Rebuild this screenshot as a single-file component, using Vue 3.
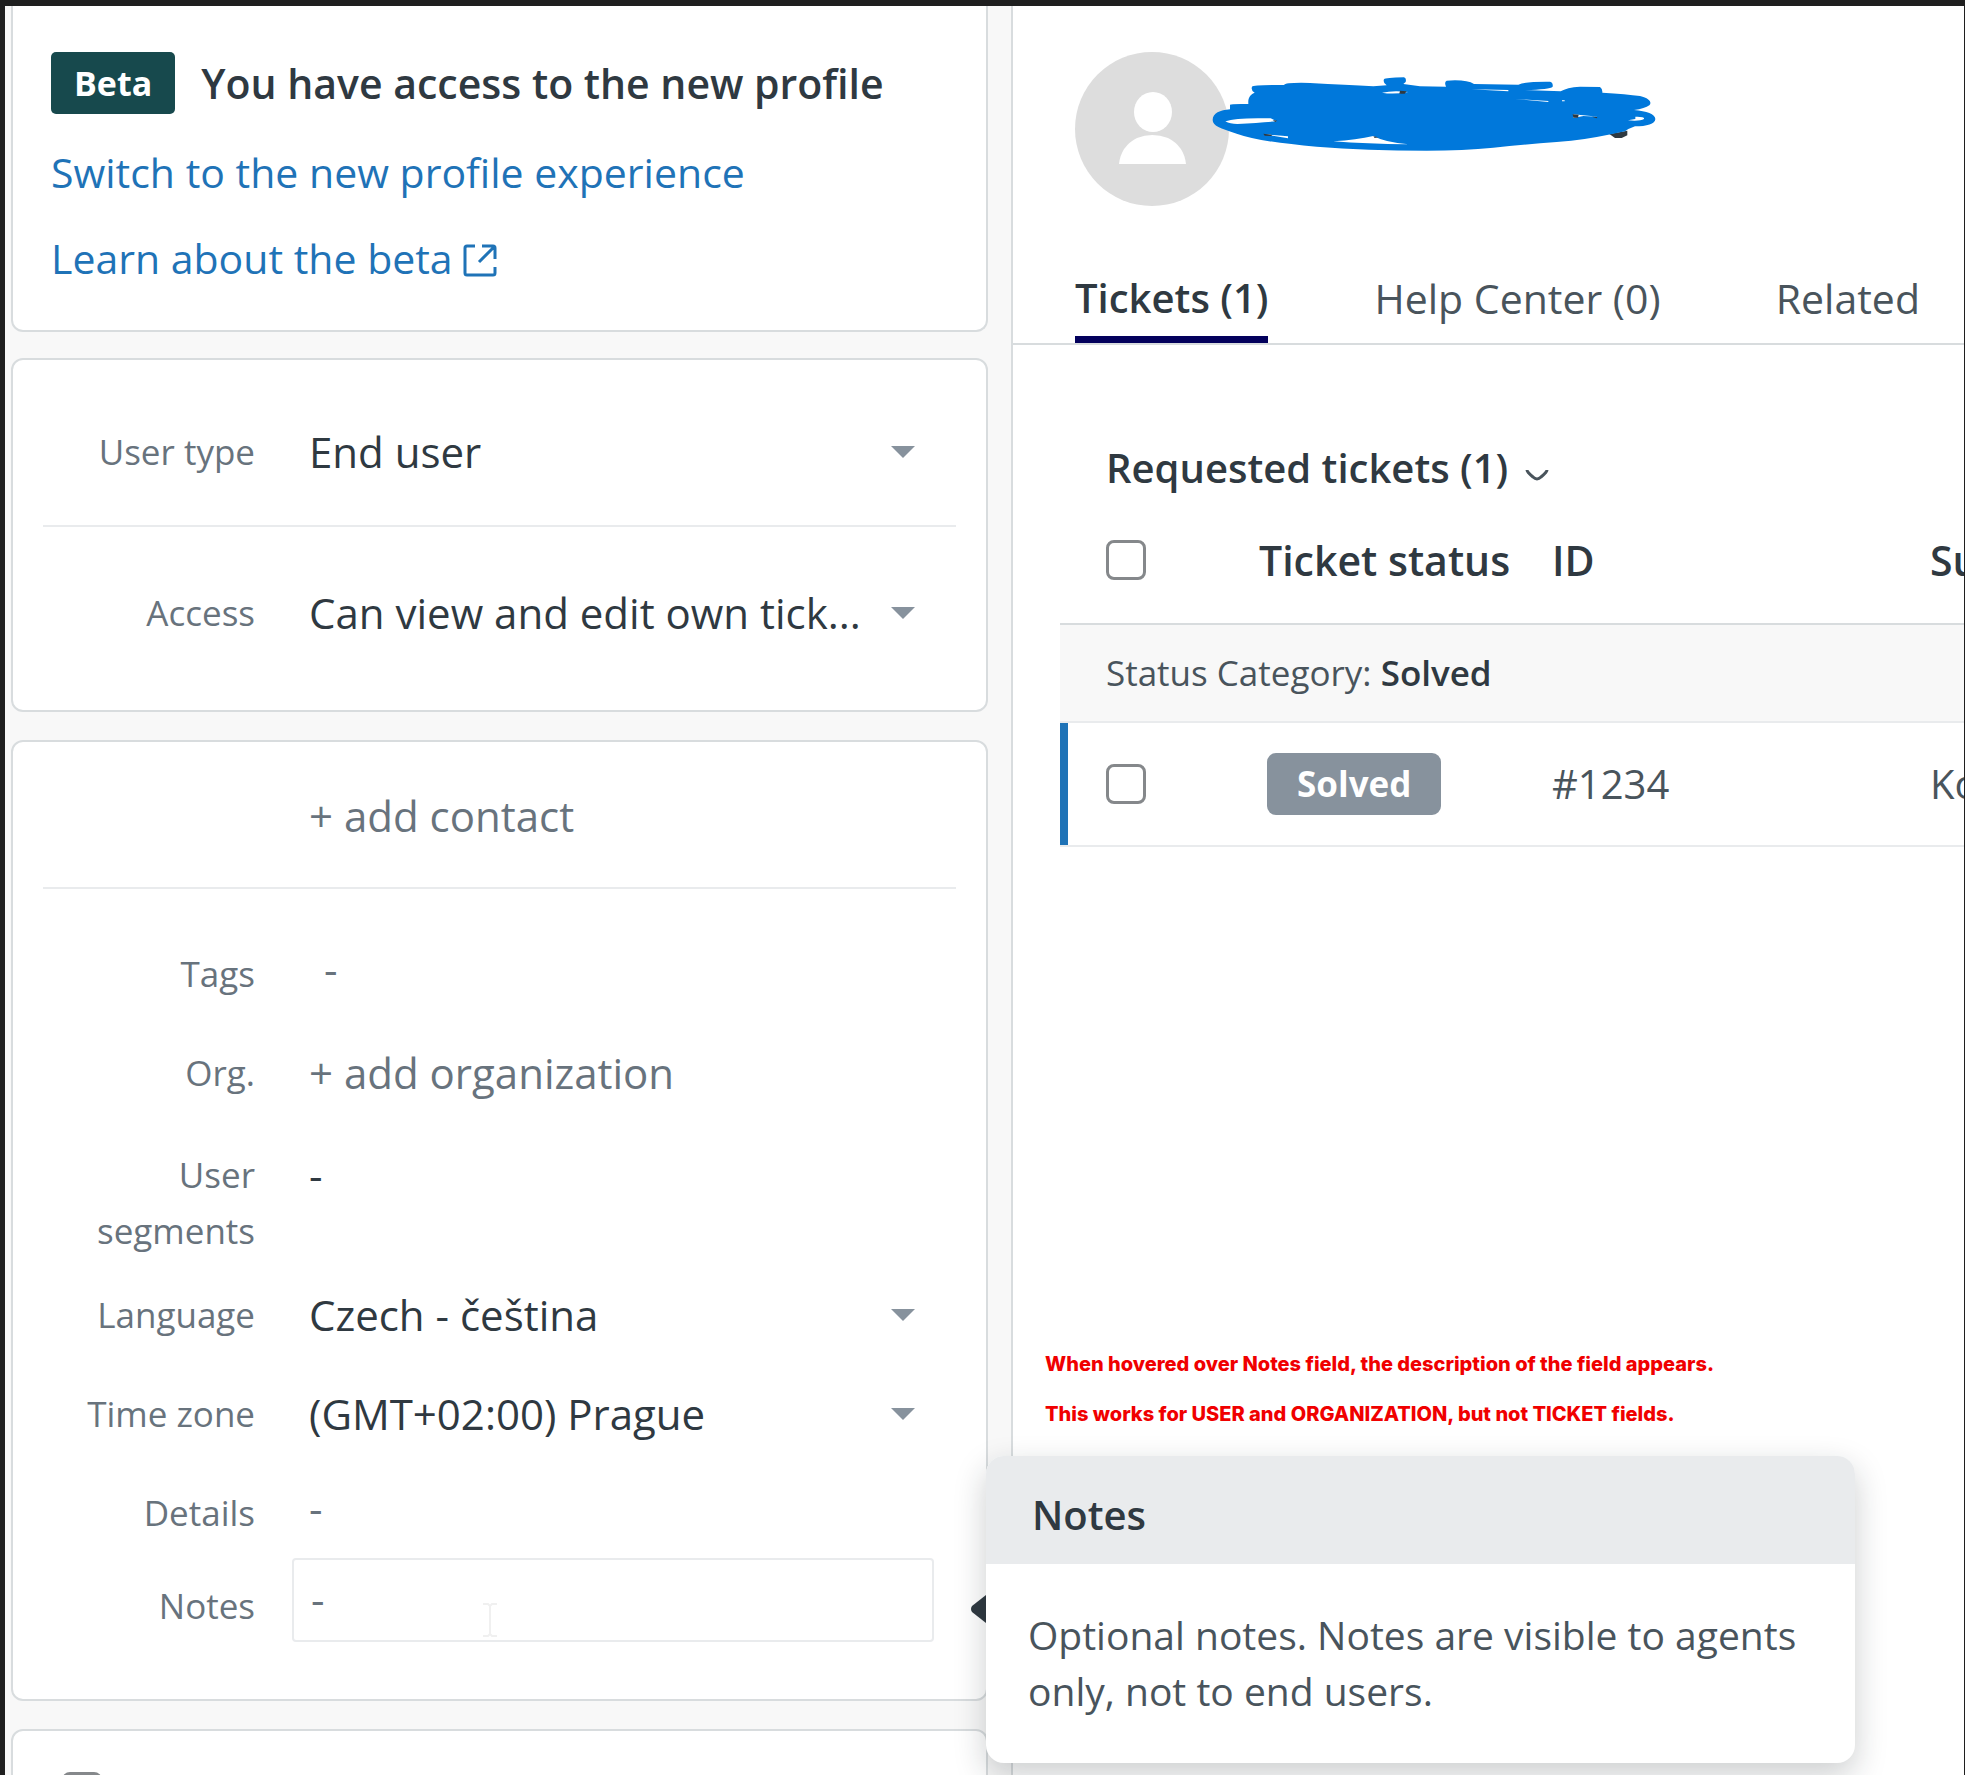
<script setup>
import { ref } from 'vue'

const userType = ref('End user')
const access = ref('Can view and edit own tick...')
const language = ref('Czech - čeština')
const timeZone = ref('(GMT+02:00) Prague')
const tabs = ['Tickets (1)', 'Help Center (0)', 'Related']
const activeTab = ref(0)
</script>

<template>
  <div class="app">
    <aside class="sidebar">
      <section class="card beta">
        <div class="beta-head">
          <span class="beta-badge">Beta</span>
          <strong class="beta-title">You have access to the new profile</strong>
        </div>
        <a class="link" href="#switch">Switch to the new profile experience</a>
        <a class="link" href="#learn">Learn about the beta
          <svg class="external" viewBox="0 0 34 34" aria-hidden="true">
            <path d="M12 2H4Q2 2 2 4V29Q2 31 4 31H30Q32 31 32 29V23M19 2H30Q32 2 32 4V15M31 3L16 18" />
          </svg>
        </a>
      </section>

      <section class="card access">
        <div class="row">
          <label for="user-type">User type</label>
          <div class="picker">
            <select id="user-type" v-model="userType"><option>End user</option></select>
            <svg class="caret" viewBox="0 0 24 12" aria-hidden="true"><path d="M0 0H24L12 12Z" /></svg>
          </div>
        </div>
        <hr />
        <div class="row">
          <label for="access">Access</label>
          <div class="picker">
            <select id="access" v-model="access"><option>Can view and edit own tick...</option></select>
            <svg class="caret" viewBox="0 0 24 12" aria-hidden="true"><path d="M0 0H24L12 12Z" /></svg>
          </div>
        </div>
      </section>

      <section class="card details">
        <div class="row contact">
          <span></span>
          <button type="button" class="add">+ add contact</button>
        </div>
        <hr />
        <div class="row">
          <label for="tags">Tags</label>
          <input id="tags" class="field tags" type="text" placeholder="-" />
        </div>
        <div class="row org">
          <span class="name">Org.</span>
          <button type="button" class="add">+ add organization</button>
        </div>
        <div class="row segments">
          <span class="name">User segments</span>
          <span class="value">-</span>
        </div>
        <div class="row">
          <label for="language">Language</label>
          <div class="picker">
            <select id="language" v-model="language"><option>Czech - čeština</option></select>
            <svg class="caret" viewBox="0 0 24 12" aria-hidden="true"><path d="M0 0H24L12 12Z" /></svg>
          </div>
        </div>
        <div class="row">
          <label for="zone">Time zone</label>
          <div class="picker">
            <select id="zone" v-model="timeZone"><option>(GMT+02:00) Prague</option></select>
            <svg class="caret" viewBox="0 0 24 12" aria-hidden="true"><path d="M0 0H24L12 12Z" /></svg>
          </div>
        </div>
        <div class="row">
          <label for="details">Details</label>
          <input id="details" class="field" type="text" placeholder="-" />
        </div>
        <div class="row notes">
          <label for="notes">Notes</label>
          <input id="notes" class="field boxed" type="text" placeholder="-" aria-describedby="notes-tip" />
          <svg class="cursor" viewBox="0 0 14 34" aria-hidden="true">
            <path d="M0 1H5L7 3L9 1H14M7 3V31M0 33H5L7 31L9 33H14" />
          </svg>
          <svg class="arrow" viewBox="0 0 16 28" aria-hidden="true"><path d="M16 0V28L2 17Q0 14 2 11Z" /></svg>
          <div id="notes-tip" class="popover" role="tooltip">
            <h3>Notes</h3>
            <p>Optional notes. Notes are visible to agents only, not to end users.</p>
          </div>
        </div>
      </section>

      <section class="card last">
        <input type="checkbox" aria-label="Select field" />
      </section>
    </aside>

    <main class="main">
      <header class="profile">
        <svg class="avatar" viewBox="0 0 155 155" aria-hidden="true">
          <circle cx="77" cy="77" r="77" fill="#ddd" />
          <ellipse cx="78" cy="60" rx="19" ry="20" fill="#fff" />
          <path d="M44 112Q46 94 62 86Q77 80 93 86Q109 94 111 112Z" fill="#fff" />
        </svg>
        <svg class="scribble" viewBox="0 0 1440 330" aria-hidden="true">
          <path d="M1228 222L1282 212V226L1265 234H1245Z" fill="#2f3941" />
          <path
            fill="#0078db"
            d="M38 180C38 160 60 150 90 148V134Q94 131 145 132C144 115 148 105 164 98Q152 92 156 80Q160 75 252 75Q256 67 330 69Q440 75 520 79L560 76Q548 68 552 58Q556 53 612 52Q620 54 617 66L610 72L660 79L738 80Q732 66 740 62Q800 58 822 72L955 74Q980 64 1050 65Q1060 68 1058 80Q1050 88 975 90L1082 94Q1100 82 1140 80L1200 81Q1208 86 1207 98Q1280 102 1320 108C1350 115 1356 128 1348 136Q1335 146 1302 150C1340 153 1366 162 1366 177C1366 192 1340 199 1305 199Q1285 206 1275 214L1225 224Q1160 238 1070 246Q970 254 880 263Q790 272 680 272Q500 272 350 260Q180 246 110 221C60 204 38 198 38 180Z"
          />
          <path
            fill="#fff"
            d="M76 184Q110 172 212 175L230 184Q180 188 112 192Q90 192 76 184ZM400 244Q470 240 520 228Q555 247 625 253Q500 252 400 244ZM546 98Q580 90 625 96Q580 104 546 98ZM1120 163L1195 170L1150 168L1120 174ZM1284 181L1306 177V170Q1335 169 1332 177Q1320 184 1284 181ZM190 222L264 229V235ZM815 88L925 90V94ZM945 117L1045 123V126ZM382 105L443 107ZM1086 121H1094V124H1086Z"
          />
          <path
            fill="#2f3941"
            d="M600 92L620 94L614 101L598 101ZM218 180L232 182L226 186ZM190 221L215 224V228L194 227ZM520 229L535 232L524 234ZM1118 163L1136 164L1134 173L1120 173ZM1176 170L1192 171L1190 175Z"
          />
        </svg>
      </header>

      <nav class="tabs">
        <button
          v-for="(tab, i) in tabs"
          :key="tab"
          type="button"
          :class="['tab', { active: i === activeTab }]"
          :data-label="tab"
          @click="activeTab = i"
        >{{ tab }}</button>
      </nav>

      <section class="tickets">
        <h2>Requested tickets (1)
          <svg class="chevron" viewBox="0 0 24 14" aria-hidden="true"><path d="M2 1Q2 3 8 8Q12 12 16 8Q22 3 22 1" /></svg>
        </h2>
        <table>
          <colgroup><col class="c-check" /><col class="c-status" /><col class="c-id" /><col /></colgroup>
          <thead>
            <tr>
              <th><input type="checkbox" aria-label="Select all tickets" /></th>
              <th>Ticket status</th>
              <th>ID</th>
              <th>Subject</th>
            </tr>
          </thead>
          <tbody>
            <tr class="group"><td colspan="4">Status Category: <b>Solved</b></td></tr>
            <tr class="ticket">
              <td><input type="checkbox" aria-label="Select ticket 1234" /></td>
              <td><span class="status">Solved</span></td>
              <td>#1234</td>
              <td>Ko</td>
            </tr>
          </tbody>
        </table>
      </section>

      <div class="remarks">
        <p>When hovered over Notes field, the description of the field appears.</p>
        <p>This works for USER and ORGANIZATION, but not TICKET fields.</p>
      </div>
    </main>
  </div>
</template>

<style>
body {
  margin: 0;
}
</style>

<style scoped>
* {
  box-sizing: border-box;
}
.app {
  display: grid;
  grid-template-columns: minmax(0, 1008fr) minmax(0, 951fr);
  height: 100vh;
  overflow: hidden;
  border: 0 solid #1f1f1f;
  border-width: 6px 1px 0 5px;
  background: #fff;
  color: #2f3941;
  font-family: "Open Sans", "Noto Sans", sans-serif;
  font-size: 40px;
  line-height: 56px;
}
button,
select,
input {
  font: inherit;
  color: inherit;
  margin: 0;
  padding: 0;
  border: 0;
  background: none;
  text-align: left;
}
.sidebar {
  position: relative;
  z-index: 1;
  display: flex;
  flex-direction: column;
  gap: 28px;
  padding: 0 23px 0 6px;
  border-right: 2px solid #d8dcde;
  background: #f8f8f8;
}
.card {
  flex: none;
  border: 2px solid #d8dcde;
  border-radius: 12px;
  background: #fff;
  font-size: 42px;
}
.beta {
  display: flex;
  flex-direction: column;
  align-items: flex-start;
  gap: 30px;
  margin-bottom: -2px;
  padding: 46px 38px 44px;
  border-top: 0;
  border-radius: 0 0 12px 12px;
}
.beta-head {
  display: flex;
  align-items: center;
  gap: 26px;
  height: 62px;
}
.beta-badge {
  padding: 3px 23px;
  border-radius: 5px;
  background: #17494d;
  color: #fff;
  font-size: 34px;
  font-weight: 700;
}
.beta-title {
  font-size: 41px;
  font-weight: 600;
}
.link {
  color: #1f73b7;
  font-size: 41px;
  text-decoration: none;
}
.external {
  width: 34px;
  height: 34px;
  vertical-align: -4px;
  fill: none;
  stroke: currentColor;
  stroke-width: 3;
}
.access {
  padding: 64px 30px 69px;
}
.access hr {
  margin: 45px 0 58px;
}
.details {
  padding: 46px 30px 57px;
}
hr {
  height: 2px;
  margin: 43px 0 57px;
  border: 0;
  background: #e9ebed;
}
.row {
  position: relative;
  display: grid;
  grid-template-columns: 212px minmax(0, 1fr);
  column-gap: 37px;
  margin-right: 22px;
}
.row + .row {
  margin-top: 43px;
}
.row + .segments {
  margin-top: 46px;
}
.segments + .row {
  margin-top: 28px;
}
.row + .notes {
  margin-top: 17px;
}
label,
.name {
  color: #68737d;
  font-size: 35px;
  text-align: right;
}
.notes label {
  padding-top: 20px;
}
.picker {
  display: flex;
  align-items: center;
  padding: 0 19px 0 17px;
}
select {
  flex: 1;
  min-width: 0;
  height: 56px;
  appearance: none;
}
.caret {
  flex: none;
  width: 24px;
  height: 12px;
  fill: #87929d;
}
.add {
  padding-left: 17px;
  color: #68737d;
}
.value {
  padding-left: 17px;
}
.field {
  width: 100%;
  height: 56px;
  padding: 0 17px 10px;
}
.field::placeholder {
  color: #68737d;
  opacity: 1;
}
.tags {
  padding-left: 32px;
}
.boxed {
  height: 84px;
  padding-bottom: 4px;
  border: 2px solid #e9ebed;
  border-radius: 4px;
}
.cursor {
  position: absolute;
  left: 440px;
  top: 45px;
  width: 14px;
  height: 34px;
  fill: none;
  stroke: #f0f0f0;
  stroke-width: 2;
}
.arrow {
  position: absolute;
  left: calc(100% + 36px);
  top: 37px;
  width: 16px;
  height: 28px;
  fill: #2f3941;
}
.popover {
  position: absolute;
  left: calc(100% + 52px);
  top: -102px;
  width: 869px;
  overflow: hidden;
  border-radius: 18px;
  background: #fff;
  box-shadow: 0 12px 32px rgba(23, 30, 38, 0.22);
}
.popover h3 {
  margin: 0;
  padding: 31px 46px 21px;
  background: #e9ebed;
  font-size: 40px;
  font-weight: 600;
}
.popover p {
  margin: 0;
  padding: 43px 42px 44px;
  color: #49545c;
  font-size: 39px;
}
.last {
  padding: 41px 49px;
  height: 160px;
}
input[type="checkbox"] {
  display: block;
  appearance: none;
  width: 40px;
  height: 40px;
  border: 3px solid #85888b;
  border-radius: 8px;
  background: #fff;
}
.main {
  min-width: 0;
  overflow: hidden;
}
.profile {
  position: relative;
  padding: 46px 62px 0;
}
.avatar {
  display: block;
  width: 155px;
  height: 155px;
}
.scribble {
  position: absolute;
  left: 187px;
  top: 54px;
  width: 480px;
  height: 110px;
}
.tabs {
  display: flex;
  gap: 106px;
  margin-top: 63px;
  padding-left: 62px;
  border-bottom: 2px solid #d8dcde;
}
.tab {
  flex: none;
  padding-bottom: 10px;
  border-bottom: 7px solid transparent;
  color: #49545c;
  font-size: 41px;
}
/* reserves the selected width so tabs do not shift when switched */
.tab::after {
  content: attr(data-label);
  display: block;
  height: 0;
  overflow: hidden;
  visibility: hidden;
  font-weight: 600;
}
.tab.active {
  border-color: #03005c;
  color: #2f3941;
  font-size: 40px;
  font-weight: 600;
}
.tickets {
  padding: 95px 0 0 47px;
}
h2 {
  margin: 0;
  padding-left: 46px;
  font-size: 40px;
  font-weight: 600;
}
.chevron {
  width: 24px;
  height: 14px;
  margin-left: 6px;
  fill: none;
  stroke: #49545c;
  stroke-width: 3;
}
table {
  width: 100%;
  table-layout: fixed;
  border-collapse: separate;
  border-spacing: 0;
}
.c-check {
  width: 199px;
}
.c-status {
  width: 293px;
}
.c-id {
  width: 378px;
}
th,
td {
  padding: 0;
  text-align: left;
  white-space: nowrap;
}
th {
  height: 129px;
  border-bottom: 2px solid #d8dcde;
  font-size: 41px;
  font-weight: 600;
}
th:first-child,
td:first-child {
  padding-left: 46px;
}
.group td {
  height: 98px;
  border-bottom: 2px solid #e9ebed;
  background: #f8f8f8;
  color: #49545c;
  font-size: 35px;
}
.group b {
  color: #2f3941;
  font-weight: 600;
}
.ticket td {
  height: 124px;
  border-bottom: 2px solid #e9ebed;
  color: #49545c;
}
.ticket td:first-child {
  box-shadow: inset 8px 0 #1f73b7;
}
.status {
  display: inline-block;
  margin-left: 8px;
  padding: 3px 30px;
  border-radius: 9px;
  background: #87929d;
  color: #fff;
  font-size: 35px;
  font-weight: 700;
}
.remarks {
  margin-top: 492px;
  padding-left: 32px;
  color: #f00000;
  font-family: Inter, "Liberation Sans", sans-serif;
  font-size: 20px;
  font-weight: 800;
  line-height: 50px;
}
.remarks p {
  margin: 0;
}
</style>
